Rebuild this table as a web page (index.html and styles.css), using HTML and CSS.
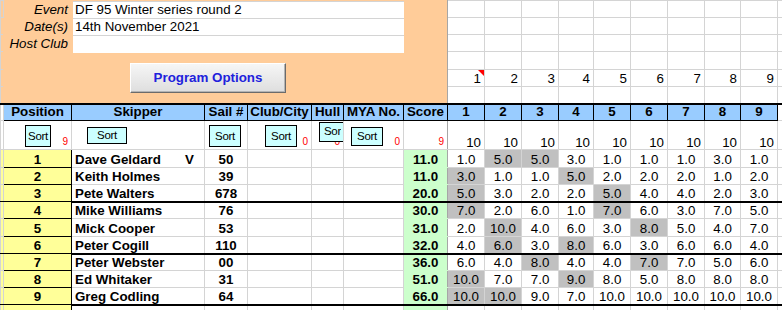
FILE: index.html
```html
<!doctype html>
<html lang="en">
<head>
    <meta charset="utf-8">
    <title>DF 95 Winter series round 2</title>
    <link rel="stylesheet" href="styles.css">
</head>
<body>
<table class="sheet">
    <colgroup>
        <col class="c-a"><col class="c-pos"><col class="c-skip"><col class="c-sail">
        <col class="c-club"><col class="c-hull"><col class="c-mya"><col class="c-score">
        <col class="c-r"><col class="c-r"><col class="c-r"><col class="c-r4">
        <col class="c-r"><col class="c-r"><col class="c-r"><col class="c-r8">
        <col class="c-r"><col class="c-x">
    </colgroup>
    <tr class="top">
        <td class="a o"></td>
        <td class="panel" colspan="7" rowspan="6">
            <div class="event">
                <div class="lbl">Event</div><div class="fld">DF 95 Winter series round 2</div>
                <div class="lbl">Date(s)</div><div class="fld">14th November 2021</div>
                <div class="lbl">Host Club</div><div class="fld"></div>
            </div>
            <div class="optbtn">Program Options</div>
        </td>
        <td></td><td></td><td></td><td></td><td></td><td></td><td></td><td></td><td></td><td></td>
    </tr>
    <tr class="top">
        <td class="a o"></td>
        <td></td><td></td><td></td><td></td><td></td><td></td><td></td><td></td><td></td><td></td>
    </tr>
    <tr class="top">
        <td class="a o"></td>
        <td></td><td></td><td></td><td></td><td></td><td></td><td></td><td></td><td></td><td></td>
    </tr>
    <tr class="top tall">
        <td class="a o"></td>
        <td></td><td></td><td></td><td></td><td></td><td></td><td></td><td></td><td></td><td></td>
    </tr>
    <tr class="top nums">
        <td class="a o"></td>
        <td class="note">1</td><td>2</td><td>3</td><td>4</td><td>5</td><td>6</td><td>7</td><td>8</td><td>9</td><td></td>
    </tr>
    <tr class="top">
        <td class="a o"></td>
        <td></td><td></td><td></td><td></td><td></td><td></td><td></td><td></td><td></td><td></td>
    </tr>
    <tr class="head">
        <td class="a"></td>
        <th>Position</th><th>Skipper</th><th>Sail #</th><th>Club/City</th><th>Hull</th><th>MYA No.</th><th>Score</th>
        <th>1</th><th>2</th><th>3</th><th>4</th><th>5</th><th>6</th><th>7</th><th>8</th><th>9</th>
        <td class="x"></td>
    </tr>
    <tr class="sort">
        <td class="a"></td>
        <td><div class="sb"><span class="btn b-pos">Sort</span><span class="cnt">9</span></div></td>
        <td><div class="sb"><span class="btn b-skip">Sort</span></div></td>
        <td><div class="sb"><span class="btn b-sail">Sort</span></div></td>
        <td><div class="sb"><span class="btn b-club">Sort</span><span class="cnt">0</span></div></td>
        <td><div class="sb"><span class="btn b-hull"><span class="clip">Sort</span></span><span class="cnt">0</span></div></td>
        <td><div class="sb"><span class="btn b-mya">Sort</span><span class="cnt">0</span></div></td>
        <td class="sc"><div class="sb"><span class="cnt">9</span></div></td>
        <td class="n">10</td><td class="n">10</td><td class="n">10</td><td class="n">10</td><td class="n">10</td>
        <td class="n">10</td><td class="n">10</td><td class="n">10</td><td class="n">10</td><td></td>
    </tr>
    <tr class="d h18">
        <td class="a y"></td><td class="pos">1</td><td class="skip">Dave Geldard<span class="vet">V</span></td><td class="sail">50</td>
        <td></td><td></td><td></td><td class="score">11.0</td>
        <td>1.0</td><td class="drop">5.0</td><td class="drop">5.0</td><td>3.0</td><td>1.0</td><td>1.0</td><td>1.0</td><td>3.0</td><td>1.0</td><td></td>
    </tr>
    <tr class="d">
        <td class="a y"></td><td class="pos">2</td><td class="skip">Keith Holmes</td><td class="sail">39</td>
        <td></td><td></td><td></td><td class="score">11.0</td>
        <td class="drop">3.0</td><td>1.0</td><td>1.0</td><td class="drop">5.0</td><td>2.0</td><td>2.0</td><td>2.0</td><td>1.0</td><td>2.0</td><td></td>
    </tr>
    <tr class="d end">
        <td class="a y"></td><td class="pos">3</td><td class="skip">Pete Walters</td><td class="sail">678</td>
        <td></td><td></td><td></td><td class="score">20.0</td>
        <td class="drop">5.0</td><td>3.0</td><td>2.0</td><td>2.0</td><td class="drop">5.0</td><td>4.0</td><td>4.0</td><td>2.0</td><td>3.0</td><td></td>
    </tr>
    <tr class="d">
        <td class="a y"></td><td class="pos">4</td><td class="skip">Mike Williams</td><td class="sail">76</td>
        <td></td><td></td><td></td><td class="score">30.0</td>
        <td class="drop">7.0</td><td>2.0</td><td>6.0</td><td>1.0</td><td class="drop">7.0</td><td>6.0</td><td>3.0</td><td>7.0</td><td>5.0</td><td></td>
    </tr>
    <tr class="d h18">
        <td class="a y"></td><td class="pos">5</td><td class="skip">Mick Cooper</td><td class="sail">53</td>
        <td></td><td></td><td></td><td class="score">31.0</td>
        <td>2.0</td><td class="drop">10.0</td><td>4.0</td><td>6.0</td><td>3.0</td><td class="drop">8.0</td><td>5.0</td><td>4.0</td><td>7.0</td><td></td>
    </tr>
    <tr class="d end">
        <td class="a y"></td><td class="pos">6</td><td class="skip">Peter Cogill</td><td class="sail">110</td>
        <td></td><td></td><td></td><td class="score">32.0</td>
        <td>4.0</td><td class="drop">6.0</td><td>3.0</td><td class="drop">8.0</td><td>6.0</td><td>3.0</td><td>6.0</td><td>6.0</td><td>4.0</td><td></td>
    </tr>
    <tr class="d">
        <td class="a y"></td><td class="pos">7</td><td class="skip">Peter Webster</td><td class="sail">00</td>
        <td></td><td></td><td></td><td class="score">36.0</td>
        <td>6.0</td><td>4.0</td><td class="drop">8.0</td><td>4.0</td><td>4.0</td><td class="drop">7.0</td><td>7.0</td><td>5.0</td><td>6.0</td><td></td>
    </tr>
    <tr class="d">
        <td class="a y"></td><td class="pos">8</td><td class="skip">Ed Whitaker</td><td class="sail">31</td>
        <td></td><td></td><td></td><td class="score">51.0</td>
        <td class="drop">10.0</td><td>7.0</td><td>7.0</td><td class="drop">9.0</td><td>8.0</td><td>5.0</td><td>8.0</td><td>8.0</td><td>8.0</td><td></td>
    </tr>
    <tr class="d end">
        <td class="a y"></td><td class="pos">9</td><td class="skip">Greg Codling</td><td class="sail">64</td>
        <td></td><td></td><td></td><td class="score">66.0</td>
        <td class="drop">10.0</td><td class="drop">10.0</td><td>9.0</td><td>7.0</td><td>10.0</td><td>10.0</td><td>10.0</td><td>10.0</td><td>10.0</td><td></td>
    </tr>
    <tr class="d">
        <td class="a y"></td><td class="pos"></td><td></td><td></td>
        <td></td><td></td><td></td><td class="score"></td>
        <td></td><td></td><td></td><td></td><td></td><td></td><td></td><td></td><td></td><td></td>
    </tr>
</table>
</body>
</html>
```

FILE: styles.css
```css
body {
	margin: 0;
	overflow: hidden;
	background: #fff;
	color: #000;
	font-family: "Liberation Sans", Arial, sans-serif;
	font-size: 13.33px;
}
table.sheet {
	border-collapse: collapse;
	table-layout: fixed;
	width: 817px;
}
col.c-a { width: 3px; }
col.c-pos { width: 68px; }
col.c-skip { width: 133px; }
col.c-sail { width: 43px; }
col.c-club { width: 64px; }
col.c-hull { width: 32px; }
col.c-mya { width: 60px; }
col.c-score { width: 44px; }
col.c-r { width: 37px; }
col.c-r4 { width: 35px; }
col.c-r8 { width: 36px; }
col.c-x { width: 40px; }

.sheet tr {
	height: 17px;
}
.sheet tr.tall, .sheet tr.h18 {
	height: 18px;
}
.sheet td, .sheet th {
	padding: 0;
	line-height: 14px;
	border: 1px solid #d4d4d4;
	vertical-align: bottom;
	white-space: nowrap;
	overflow: hidden;
}
td.o {
	background: #ffcc99;
}
td.y {
	background: #ffff99;
}

/* event panel */
td.panel {
	background: #ffcc99;
	border-color: #ffcc99;
	border-right-color: #a6a6a6;
	vertical-align: top;
}
.event {
	display: grid;
	grid-template-columns: 64px 331px;
	grid-template-rows: 16px 16px 17px;
	column-gap: 5px;
	row-gap: 1px;
	padding-top: 1px;
	background: linear-gradient(to right, transparent 69px, #d4d4d4 69px);
	width: 400px;
}
.event .lbl {
	font-style: italic;
	text-align: right;
	line-height: 16px;
	background: #ffcc99;
}
.event .fld {
	background: #fff;
	padding-left: 2px;
	line-height: 16px;
}
.optbtn {
	width: 154px;
	height: 28px;
	margin: 10px 0 0 126px;
	line-height: 28px;
	text-align: center;
	font-weight: bold;
	color: #2121dc;
	background: linear-gradient(#f6f6f6, #dedede);
	border: 1px solid;
	border-color: #fff #6b6b6b #6b6b6b #fff;
	box-shadow: inset -1px -1px 0 #b4b4b4;
}

tr.nums td {
	text-align: right;
	padding-right: 3px;
}
td.note {
	position: relative;
}
td.note::after {
	content: "";
	position: absolute;
	top: 0;
	right: 0;
	border-top: 6px solid #ff0000;
	border-left: 6px solid transparent;
}

/* header */
tr.head th {
	background: #99ccff;
	border: 1px solid #000;
	border-top-width: 2px;
	font-weight: bold;
	text-align: center;
	vertical-align: middle;
}
tr.head td {
	border-top: 2px solid #000;
}

/* sort row */
.sheet tr.sort {
	height: 29px;
}
tr.sort td {
	vertical-align: top;
}
tr.sort td.n {
	vertical-align: bottom;
	text-align: right;
	padding-right: 3px;
	line-height: 13px;
}
tr.sort td.sc {
	border-right-color: #a6a6a6;
}
.sb {
	display: flex;
	height: 27px;
}
.btn {
	box-sizing: border-box;
	display: flex;
	align-items: center;
	justify-content: center;
	background: #ccffff;
	border: 1px solid #000;
	font-size: 11.5px;
	letter-spacing: -0.3px;
	line-height: 13px;
	position: relative;
}
.b-pos { width: 26px; height: 22px; margin: 4px 0 0 21px; }
.b-skip { width: 40px; height: 17px; margin: 6px 0 0 15px; }
.b-sail { width: 32px; height: 22px; margin: 4px 0 0 4px; }
.b-club { width: 32px; height: 22px; margin: 4px 0 0 17px; }
.b-mya { width: 32px; height: 19px; margin: 6px 0 0 7px; }
.b-hull {
	width: 26px;
	height: 20px;
	margin: 1px -30px 0 7px;
	justify-content: flex-start;
	padding: 0 0 1px 4px;
}
.b-hull .clip {
	width: 17px;
	overflow: hidden;
}
.cnt {
	margin-left: auto;
	align-self: flex-end;
	padding: 0 3px 1px 0;
	color: #ff0000;
	font-size: 10px;
	line-height: 10px;
}

/* results */
tr.d td {
	text-align: center;
}
td.pos {
	border: 1px solid #000;
	background: #ffff99;
	font-weight: bold;
}
td.skip {
	text-align: left !important;
	padding-left: 3px;
	font-weight: bold;
}
.vet {
	float: right;
	margin-right: 10px;
}
td.sail {
	font-weight: bold;
}
td.score {
	background: #ccffcc;
	font-weight: bold;
	border-top-color: #ccffcc;
	border-bottom-color: #ccffcc;
	border-right-color: #a6a6a6;
}
td.drop {
	background: #c0c0c0;
}
tr.end td {
	border-bottom: 2px solid #000;
}
tr.end td.a, tr.end td.pos {
	border-bottom: 1px solid #000;
}
```
